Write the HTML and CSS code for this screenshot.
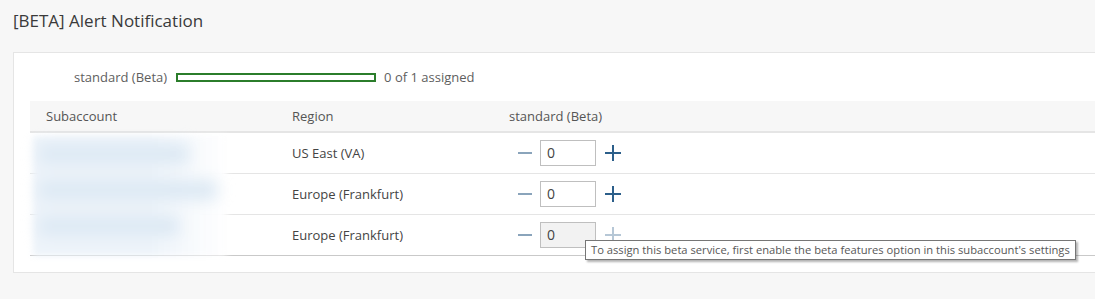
FILE: index.html
```html
<!DOCTYPE html>
<html lang="en">
<head>
    <meta charset="UTF-8">
    <title>[BETA] Alert Notification</title>
    <link rel="stylesheet" href="styles.css">
</head>
<body>

    <!-- Page title -->
    <h1 class="page-title">[BETA] Alert Notification</h1>

    <!-- Entitlement panel -->
    <div class="panel">
        <div class="quota">
            <span class="quota-label">standard (Beta)</span>
            <span class="quota-bar"><span class="quota-fill" style="width: 0%"></span></span>
            <span class="quota-text">0 of 1 assigned</span>
        </div>

        <div class="table-wrap">
            <table class="assign-table">
                <thead>
                    <tr>
                        <th class="col-sub">Subaccount</th>
                        <th class="col-region">Region</th>
                        <th>standard (Beta)</th>
                    </tr>
                </thead>
                <tbody>
                    <tr>
                        <td class="col-sub"></td>
                        <td class="col-region">US East (VA)</td>
                        <td>
                            <div class="stepper">
                                <svg class="step minus" width="16" height="16" viewBox="0 0 16 16"><path d="M1 8h14" /></svg>
                                <span class="step-input">0</span>
                                <svg class="step plus" width="16" height="16" viewBox="0 0 16 16"><path d="M0 8h16M8 0v16" /></svg>
                            </div>
                        </td>
                    </tr>
                    <tr>
                        <td class="col-sub"></td>
                        <td class="col-region">Europe (Frankfurt)</td>
                        <td>
                            <div class="stepper">
                                <svg class="step minus" width="16" height="16" viewBox="0 0 16 16"><path d="M1 8h14" /></svg>
                                <span class="step-input">0</span>
                                <svg class="step plus" width="16" height="16" viewBox="0 0 16 16"><path d="M0 8h16M8 0v16" /></svg>
                            </div>
                        </td>
                    </tr>
                    <tr>
                        <td class="col-sub"></td>
                        <td class="col-region">Europe (Frankfurt)</td>
                        <td>
                            <div class="stepper">
                                <svg class="step minus" width="16" height="16" viewBox="0 0 16 16"><path d="M1 8h14" /></svg>
                                <span class="step-input disabled">0</span>
                                <svg class="step plus disabled" width="16" height="16" viewBox="0 0 16 16"><path d="M0 8h16M8 0v16" /></svg>
                                <span class="tooltip">To assign this beta service, first enable the beta features option in this subaccount's settings</span>
                            </div>
                        </td>
                    </tr>
                </tbody>
            </table>

            <!-- Redacted subaccount names -->
            <div class="redact">
                <span class="blob" style="width: 150px"></span>
                <span class="blob" style="width: 178px"></span>
                <span class="blob" style="width: 140px"></span>
            </div>
        </div>
    </div>

</body>
</html>
```

FILE: styles.css
```css
/* General Reset */
* {
    margin: 0;
    padding: 0;
    box-sizing: border-box;
}

body {
    font-family: 'Open Sans', 'Noto Sans', sans-serif;
    background-color: #f7f7f7;
    color: #3c3c3c;
    font-size: 13px;
}

/* Title */
.page-title {
    font-size: 17px;
    font-weight: normal;
    color: #3a3a3a;
    padding: 9px 13px 0;
    height: 52px;
}

/* Panel */
.panel {
    margin-left: 13px;
    background-color: white;
    border: 1px solid #e5e5e5;
    border-right: none;
    padding: 0 0 16px 16px;
}

.quota {
    display: flex;
    align-items: center;
    height: 48px;
    padding-left: 44px;
    color: #5e5e5e;
}

.quota-bar {
    display: inline-block;
    width: 200px;
    height: 9px;
    border: 2px solid #2b7d2b;
    margin: 0 8px 0 9px;
}

.quota-fill {
    display: block;
    height: 100%;
    background-color: #2b7d2b;
}

/* Table */
.table-wrap {
    position: relative;
}

.assign-table {
    width: 100%;
    border-collapse: collapse;
}

.assign-table th {
    background-color: #f7f7f7;
    font-weight: normal;
    text-align: left;
    color: #555;
    height: 31px;
    padding: 0 16px;
    border-bottom: 2px solid #e5e5e5;
}

.assign-table td {
    height: 41px;
    padding: 0 16px;
    border-bottom: 1px solid #e5e5e5;
    color: #444;
    font-weight: normal;
}

.assign-table tbody tr:last-child td {
    border-bottom-color: #c9c9c9;
}

.col-sub {
    width: 246px;
}

.col-region {
    width: 217px;
}

/* Stepper */
.stepper {
    position: relative;
    display: flex;
    align-items: center;
    padding-left: 8px;
}

.step {
    stroke: #2c5f8a;
    stroke-width: 2;
    fill: none;
}

.step.minus {
    stroke: #8aa4bb;
    margin-right: 7px;
}

.step.plus {
    margin-left: 9px;
}

.step.disabled {
    stroke: #b6c7d6;
}

.step-input {
    width: 56px;
    height: 26px;
    border: 1px solid #bfbfbf;
    padding-left: 6px;
    line-height: 24px;
    font-size: 14px;
}

.step-input.disabled {
    background-color: #f2f2f2;
}

.tooltip {
    position: absolute;
    left: 76px;
    top: 18px;
    white-space: nowrap;
    background-color: white;
    border: 1px solid #767676;
    box-shadow: 2px 2px 2px rgba(0, 0, 0, 0.3);
    padding: 1px 5px 2px;
    font-size: 11.2px;
    color: #575757;
}

/* Redaction over subaccount names */
.redact {
    position: absolute;
    left: 3px;
    top: 35px;
    width: 194px;
    height: 120px;
    background: linear-gradient(to right, #eef4fa 60%, rgba(255, 255, 255, 0.95) 100%);
    filter: blur(3px);
    display: flex;
    flex-direction: column;
    gap: 16px;
    padding: 8px 0 0 6px;
}

.blob {
    display: block;
    height: 20px;
    background-color: #dde9f4;
    filter: blur(7px);
}
```
